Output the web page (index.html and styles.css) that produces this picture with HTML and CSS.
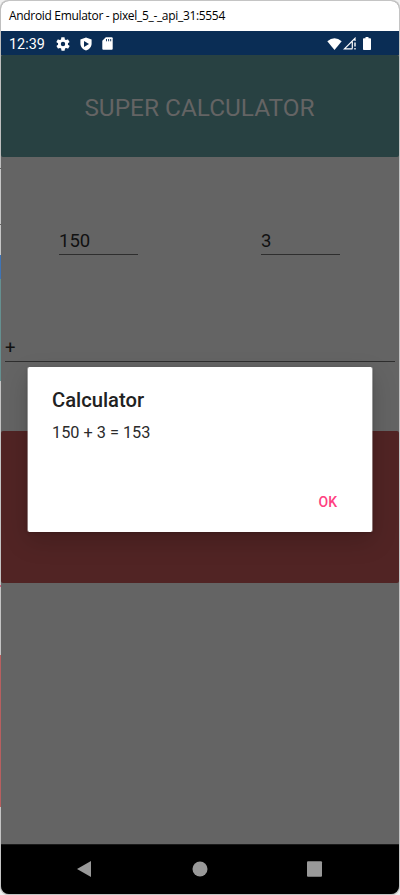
FILE: index.html
```html
<!DOCTYPE html>
<html lang="en">
<head>
<meta charset="utf-8">
<title>Android Emulator</title>
<link rel="stylesheet" href="styles.css">
</head>
<body>
<div class="desktop">
  <div class="window">
    <header class="titlebar"><span class="caption">Android Emulator - pixel_5_-_api_31:5554</span></header>
    <div class="status">
      <span class="clock">12:39</span>
      <svg class="gear" viewBox="0 0 24 24" width="16" height="16"><path fill="#fff" fill-rule="evenodd" d="M19.4 13a7.500 7.500 0 0 0 0-2l2.100-1.600c.2-.2.300-.4.100-.7l-2-3.400c-.1-.2-.4-.3-.6-.2l-2.500 1a7.300 7.300 0 0 0-1.700-1l-.4-2.600c0-.3-.2-.5-.5-.5h-4c-.3 0-.5.2-.5.500l-.4 2.600a7.300 7.300 0 0 0-1.700 1l-2.500-1c-.2-.1-.5 0-.6.2l-2 3.400c-.1.300-.1.500.1.700L4.600 11a7.500 7.500 0 0 0 0 2l-2.100 1.600c-.2.200-.2.500-.1.700l2 3.400c.1.200.4.300.6.200l2.500-1a7.300 7.300 0 0 0 1.700 1l.4 2.600c0 .3.200.5.500.5h4c.3 0 .5-.2.500-.5l.4-2.600a7.300 7.300 0 0 0 1.700-1l2.500 1c.2.100.5 0 .6-.2l2-3.400c.1-.2.100-.5-.1-.7zM12 15.300a3.300 3.300 0 1 1 0-6.600 3.300 3.300 0 0 1 0 6.600z"/></svg>
      <svg class="shield" viewBox="0 0 12 14" width="12" height="14"><path fill="#fff" d="M6 .4 11.600 2.500V6.500C11.600 9.800 9.300 12.500 6 13.600 2.700 12.500.4 9.800.4 6.500V2.500z"/><path fill="#0a2d55" d="M4 4.100 9 7 4 9.900z"/></svg>
      <svg class="card" viewBox="0 0 11 13" width="11" height="13"><path fill="#fff" d="M3.800.3H9.700Q10.700.3 10.700 1.300V11.700Q10.700 12.700 9.700 12.700H1.300Q.3 12.700.3 11.700V3.800z"/><path stroke="#0a2d55" stroke-width=".9" d="M4.500 2v2.300M6.600 2v2.300M8.700 2v2.300"/></svg>
      <svg class="wifi" viewBox="0 0 15 12" width="15" height="12"><path fill="#fff" d="M.3 3.200Q7.500-2.500 14.700 3.200L7.500 12z"/></svg>
      <svg class="signal" viewBox="0 0 13 13" width="13" height="13"><path fill="none" stroke="#fff" stroke-width="1.200" d="M12 4V1.300L1.400 11.900H9.500M9.300 11.500V4.800"/><path fill="#fff" d="M11.300 5.500h1.400v4h-1.400zM11.300 11h1.400v1.500h-1.400z"/></svg>
      <svg class="battery" viewBox="0 0 8 13" width="8" height="13"><path fill="#fff" d="M2.500 0h3v1.200H7.200Q8 1.200 8 2V12.200Q8 13 7.200 13H.8Q0 13 0 12.200V2Q0 1.200.8 1.200H2.500z"/></svg>
    </div>
    <main class="app">
      <h1 class="banner">SUPER CALCULATOR</h1>
      <div class="operands">
        <div class="field">150</div>
        <div class="field">3</div>
      </div>
      <div class="operator">+</div>
      <div class="action"></div>
      <section class="dialog">
        <h2>Calculator</h2>
        <p>150 + 3 = 153</p>
        <div class="buttons"><span>OK</span></div>
      </section>
    </main>
    <nav class="navbar">
      <svg viewBox="0 0 16 16" width="16" height="16"><path fill="#999" d="M14 0V16L0 8z"/></svg>
      <svg viewBox="0 0 16 16" width="16" height="16"><circle cx="8" cy="8" r="7.500" fill="#999"/></svg>
      <svg viewBox="0 0 16 16" width="16" height="16"><rect x="0" y=".2" width="15" height="15.500" rx="1" fill="#999"/></svg>
    </nav>
  </div>
</div>
</body>
</html>
```
FILE: styles.css
```css
* { box-sizing: border-box; }
body { margin: 0; font-family: Roboto, sans-serif; background: #f0f0f0; }
svg { display: block; flex: none; }

.desktop {
  width: 400px;
  height: 895px;
  padding: 1px;
  border-radius: 8px;
  background: linear-gradient(#bfbfbf 168px, #666 168px 169px, #c6c6c6 169px 224px, #666 224px 225px, #c6c6c6 225px 255px, #3f74b5 255px 279px, #659090 279px 381px, #c4c4c4 381px 585px, #c86482 585px 587px, #c4c4c4 587px 655px, #b85f5f 655px 807px, #c4c4c4 807px) left / 1px 100% no-repeat, #c4c4c4;
}
.window {
  display: flex;
  flex-direction: column;
  height: 893px;
  overflow: hidden;
  border-radius: 8px;
  background: #646464;
}

.titlebar { height: 30px; padding-left: 8px; background: #fff; }
.caption {
  display: block;
  font: 12px/30px "Open Sans", sans-serif;
  letter-spacing: -0.32px;
  color: #000;
  white-space: nowrap;
}

.status {
  display: flex;
  align-items: center;
  height: 24px;
  padding: 1px 28px 0 8px;
  background: #0a2d55;
}
.clock { width: 46px; padding-top: 2px; font-size: 14.4px; line-height: 22px; color: #fff; }
.shield { margin-left: 8.500px; }
.card { margin-left: 10.500px; }
.wifi { margin-left: auto; }
.signal { margin-left: 1px; }
.battery { margin-left: 7px; }

.app { position: relative; height: 789px; background: #646464; }
.banner {
  height: 102px;
  margin: 0;
  padding: 3px 1px 0 0;
  border-radius: 2px;
  background: #284142;
  font-size: 24.400px;
  font-weight: 400;
  line-height: 100px;
  text-align: center;
  color: #646464;
}
.operands {
  display: flex;
  justify-content: space-between;
  padding: 72px 59px 0 58px;
}
.field {
  width: 79px;
  height: 26px;
  border-bottom: 1px solid #2e2e2e;
  font-size: 18.500px;
  line-height: 25px;
  color: #111;
}
.operator {
  height: 27px;
  margin: 80px 4px 0;
  border-bottom: 1px solid #2e2e2e;
  font-size: 18.500px;
  line-height: 26px;
  color: #111;
}
.action { height: 152px; margin-top: 69px; border-radius: 2px; background: #512424; }

.dialog {
  position: absolute;
  top: 312px;
  left: 26px;
  width: 346px;
  height: 165px;
  padding: 21px 35px 0 24px;
  border: solid rgba(255, 255, 255, .4);
  border-width: 0 1px;
  border-radius: 2px;
  background: #fff;
  background-clip: padding-box;
  box-shadow: 0 9px 24px rgba(0, 0, 0, .17), 0 1px 3px rgba(0, 0, 0, .15);
}
.dialog h2 { margin: 0; font-size: 20.200px; font-weight: 500; line-height: 25px; color: #212121; }
.dialog p { margin: 9px 0 0; font-size: 16.300px; line-height: 22px; color: #2b2b2b; }
.buttons { margin-top: 48px; font-size: 14px; font-weight: 500; line-height: 20px; text-align: right; color: #ff4081; }

.navbar {
  display: flex;
  align-items: center;
  gap: 99px;
  height: 50px;
  padding: 0 0 2px 76px;
  border-top: 1px solid #1a1a1a;
  background: #000;
}
```
